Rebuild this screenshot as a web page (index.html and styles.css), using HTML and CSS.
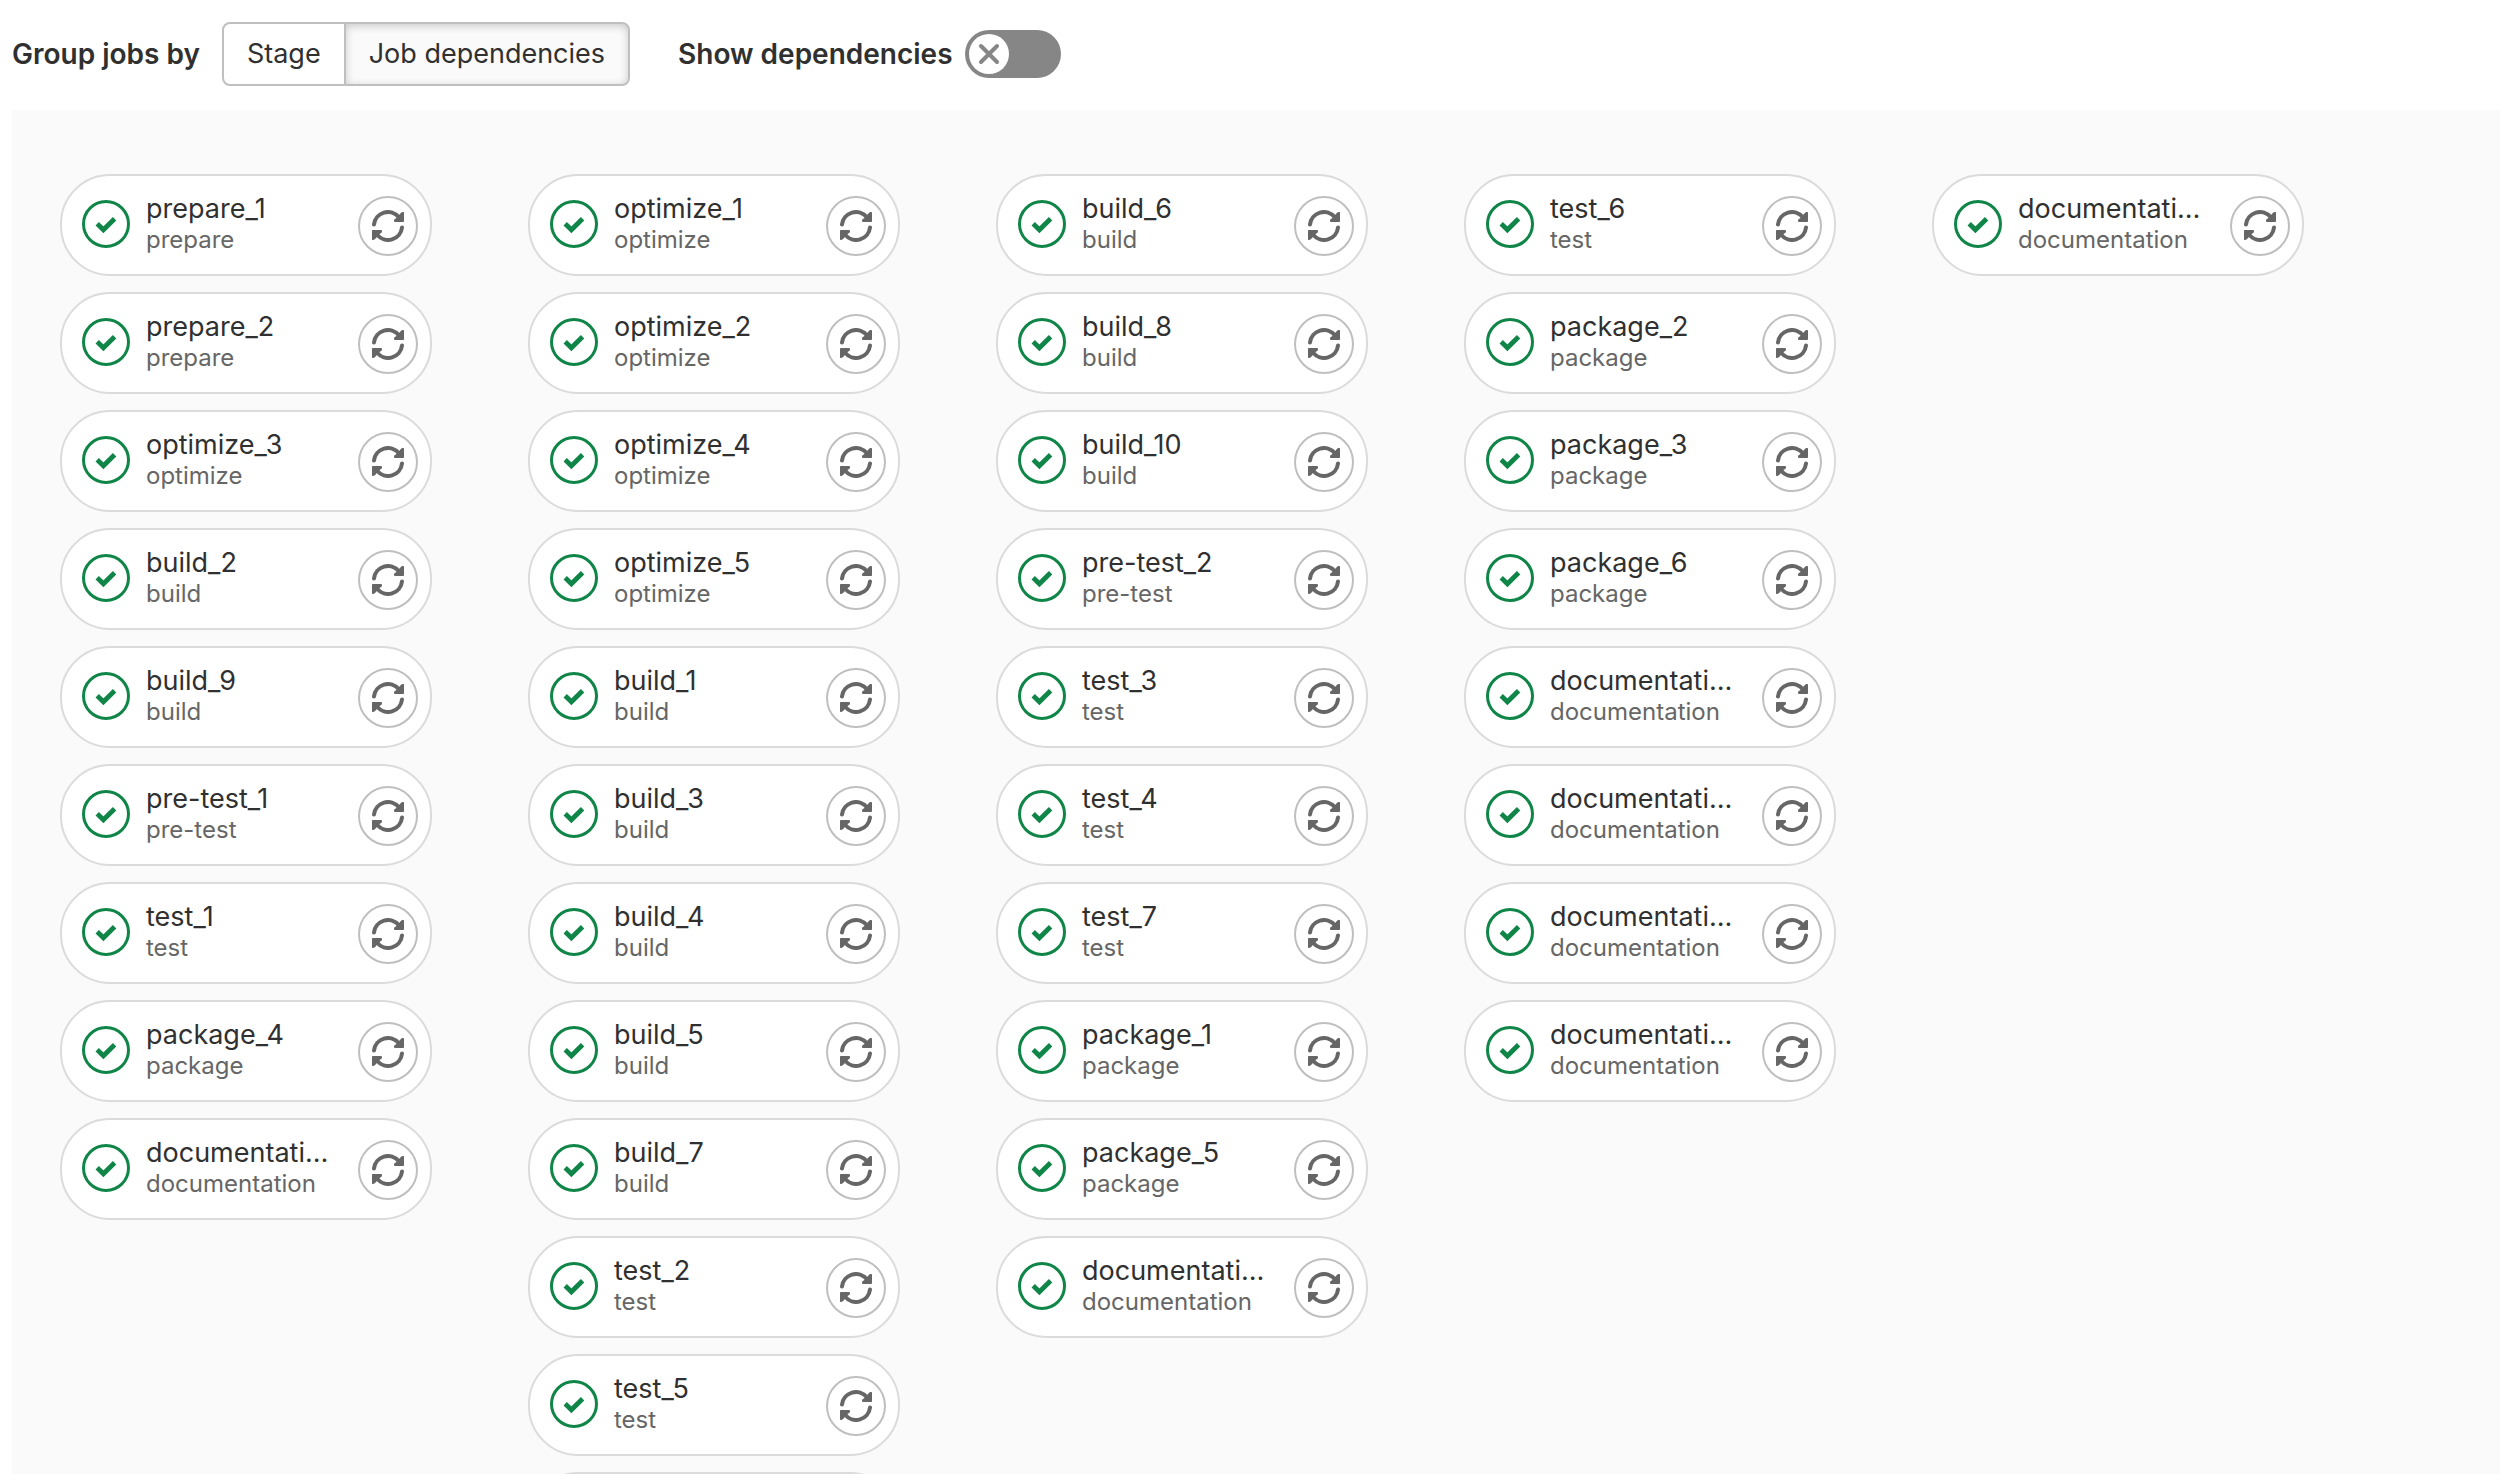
FILE: index.html
```html
<!DOCTYPE html>
<html lang="en">
<head>
<meta charset="utf-8">
<title>Pipeline jobs</title>
<link rel="stylesheet" href="styles.css">
</head>
<body>
<svg class="sprite" aria-hidden="true">
  <symbol id="icon-passed" viewBox="0 0 48 48">
    <circle cx="24" cy="24" r="22.5" fill="none" stroke="currentColor" stroke-width="3"/>
    <path d="M15.2 23.8 21.4 29.8 32.6 18.8" fill="none" stroke="currentColor" stroke-width="4.8"/>
  </symbol>
  <symbol id="icon-retry" viewBox="0 0 32 32">
    <g id="retry-arrow">
      <path d="M2 14.5A14 14 0 0 1 26.8 7.2" fill="none" stroke="currentColor" stroke-width="4" stroke-linecap="round"/>
      <path d="M30.6 2H31.4Q32 2 32 2.8V11.2Q32 12 31.2 12H23Q22 12 22 11V10.2Q22 9.6 22.6 9.2L24.4 8 28.4 3.4Q29.8 2 30.6 2Z" fill="currentColor"/>
    </g>
    <use href="#retry-arrow" transform="rotate(180 16 16)"/>
  </symbol>
</svg>

<header class="toolbar">
  <div class="toolbar-item">
    <span class="toolbar-label" id="group-label">Group jobs by</span>
    <div class="segmented" role="group" aria-labelledby="group-label">
      <button class="segment" type="button" aria-pressed="false">Stage</button>
      <button class="segment segment-selected" type="button" aria-pressed="true">Job dependencies</button>
    </div>
  </div>
  <div class="toolbar-item toolbar-item-toggle">
    <label class="toolbar-label" for="show-deps">Show dependencies</label>
    <span class="toggle">
      <input class="toggle-input" type="checkbox" role="switch" id="show-deps">
      <svg class="toggle-knob" viewBox="0 0 40 40" aria-hidden="true">
        <circle cx="20" cy="20" r="20" fill="#fff"/>
        <path d="M12 12 28 28M28 12 12 28" fill="none" stroke="currentColor" stroke-width="4" stroke-linecap="round"/>
      </svg>
    </span>
  </div>
</header>

<main class="graph" id="graph"></main>
<script src="graph.js"></script>
</body>
</html>
```
FILE: styles.css
```css
* {
  box-sizing: border-box;
}

html {
  scrollbar-width: none;
}

body {
  margin: 0;
  min-height: 100vh;
  display: flex;
  flex-direction: column;
  background: #fff;
  color: #303030;
  font-family: Inter, "Liberation Sans", sans-serif;
  font-size: 27px;
  line-height: 32px;
}

.sprite {
  display: none;
}

.toolbar {
  display: flex;
  align-items: center;
  gap: 48px;
  padding: 22px 12px 24px;
}

.toolbar-item {
  display: flex;
  align-items: center;
  gap: 22px;
}

.toolbar-item-toggle {
  gap: 12px;
}

.toolbar-label {
  font-size: 28px;
  font-weight: 600;
}

.segmented {
  display: flex;
}

.segment {
  height: 64px;
  padding: 0 23px;
  border: 2px solid #bfbfbf;
  border-radius: 8px 0 0 8px;
  background: #fff;
  color: inherit;
  font: inherit;
}

.segment + .segment {
  margin-left: -2px;
  border-radius: 0 8px 8px 0;
}

.segment-selected {
  background: #fafafa;
  box-shadow: inset 0 2px 8px rgba(0, 0, 0, 0.2);
}

.toggle {
  display: grid;
  align-items: center;
}

.toggle-input,
.toggle-knob {
  grid-area: 1 / 1;
}

.toggle-input {
  appearance: none;
  width: 96px;
  height: 48px;
  margin: 0;
  border-radius: 24px;
  background: #868686;
}

.toggle-knob {
  width: 40px;
  height: 40px;
  margin-left: 4px;
  color: #868686;
  pointer-events: none;
}

.graph {
  flex: 1;
  display: flex;
  align-items: flex-start;
  gap: 96px;
  margin-left: 12px;
  padding: 64px 48px;
  background: #fafafa;
}

.jobs {
  display: flex;
  flex-direction: column;
  gap: 16px;
  width: 372px;
  margin: 0;
  padding: 0;
  list-style: none;
}

.job {
  display: flex;
  align-items: center;
  height: 102px;
  padding: 0 12px 0 20px;
  border: 2px solid #dbdbdb;
  border-radius: 50px;
  background: #fff;
}

.job-link {
  flex: 1;
  min-width: 0;
  display: flex;
  align-items: center;
  gap: 16px;
  padding-bottom: 2px;
  color: inherit;
  text-decoration: none;
}

.job-status {
  flex: none;
  width: 48px;
  height: 48px;
  color: #108548;
}

.job-text {
  width: 186px;
}

.job-name,
.job-stage {
  display: block;
  overflow: hidden;
  text-overflow: ellipsis;
  white-space: nowrap;
}

.job-stage {
  color: #666;
  font-size: 24px;
  line-height: 30px;
}

.job-retry {
  flex: none;
  display: grid;
  place-items: center;
  width: 60px;
  height: 60px;
  margin-top: 2px;
  padding: 0;
  border: 2px solid #bfbfbf;
  border-radius: 50%;
  background: #fff;
  color: #666;
}

.job-retry svg {
  width: 32px;
  height: 32px;
}
```
FILE: graph.js
```javascript
// Each layer lists the jobs that can run once the previous layer is done.
const layers = [
  ["prepare_1", "prepare_2", "optimize_3", "build_2", "build_9", "pre-test_1", "test_1", "package_4", "documentation_1"],
  ["optimize_1", "optimize_2", "optimize_4", "optimize_5", "build_1", "build_3", "build_4", "build_5", "build_7", "test_2", "test_5", "test_8"],
  ["build_6", "build_8", "build_10", "pre-test_2", "test_3", "test_4", "test_7", "package_1", "package_5", "documentation_2"],
  ["test_6", "package_2", "package_3", "package_6", "documentation_3", "documentation_4", "documentation_5", "documentation_6"],
  ["documentation_7"],
];

const jobCard = (name) => `
  <li class="job">
    <a class="job-link" href="#${name}">
      <svg class="job-status" role="img" aria-label="Passed"><use href="#icon-passed"/></svg>
      <span class="job-text">
        <span class="job-name">${name}</span>
        <span class="job-stage">${name.split("_")[0]}</span>
      </span>
    </a>
    <button class="job-retry" type="button" aria-label="Retry ${name}">
      <svg aria-hidden="true"><use href="#icon-retry"/></svg>
    </button>
  </li>`;

document.getElementById("graph").innerHTML = layers
  .map((jobs) => `<ul class="jobs">${jobs.map(jobCard).join("")}</ul>`)
  .join("");
```
